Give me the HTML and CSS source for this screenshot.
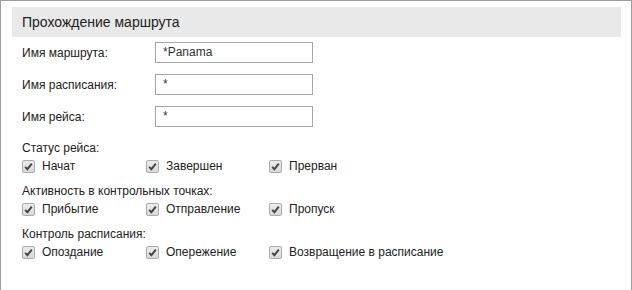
FILE: index.html
```html
<!DOCTYPE html>
<html>
<head>
<meta charset="utf-8">
<link rel="stylesheet" href="styles.css">
</head>
<body>
<div class="panel">
  <div class="header">Прохождение маршрута</div>
  <div class="fields">
    <div class="field"><span class="flabel">Имя маршрута:</span><span class="input">*Panama</span></div>
    <div class="field"><span class="flabel">Имя расписания:</span><span class="input">*</span></div>
    <div class="field"><span class="flabel">Имя рейса:</span><span class="input">*</span></div>
  </div>
  <div class="group">
    <div class="glabel">Статус рейса:</div>
    <div class="checks">
      <div class="check"><span class="box"><svg viewBox="0 0 13 13" width="13" height="13"><path d="M3.2 6.8 L5.4 9.2 L9.8 3.6" fill="none" stroke="#444" stroke-width="1.9"/></svg></span>Начат</div>
      <div class="check"><span class="box"><svg viewBox="0 0 13 13" width="13" height="13"><path d="M3.2 6.8 L5.4 9.2 L9.8 3.6" fill="none" stroke="#444" stroke-width="1.9"/></svg></span>Завершен</div>
      <div class="check"><span class="box"><svg viewBox="0 0 13 13" width="13" height="13"><path d="M3.2 6.8 L5.4 9.2 L9.8 3.6" fill="none" stroke="#444" stroke-width="1.9"/></svg></span>Прерван</div>
    </div>
  </div>
  <div class="group">
    <div class="glabel">Активность в контрольных точках:</div>
    <div class="checks">
      <div class="check"><span class="box"><svg viewBox="0 0 13 13" width="13" height="13"><path d="M3.2 6.8 L5.4 9.2 L9.8 3.6" fill="none" stroke="#444" stroke-width="1.9"/></svg></span>Прибытие</div>
      <div class="check"><span class="box"><svg viewBox="0 0 13 13" width="13" height="13"><path d="M3.2 6.8 L5.4 9.2 L9.8 3.6" fill="none" stroke="#444" stroke-width="1.9"/></svg></span>Отправление</div>
      <div class="check"><span class="box"><svg viewBox="0 0 13 13" width="13" height="13"><path d="M3.2 6.8 L5.4 9.2 L9.8 3.6" fill="none" stroke="#444" stroke-width="1.9"/></svg></span>Пропуск</div>
    </div>
  </div>
  <div class="group">
    <div class="glabel">Контроль расписания:</div>
    <div class="checks">
      <div class="check"><span class="box"><svg viewBox="0 0 13 13" width="13" height="13"><path d="M3.2 6.8 L5.4 9.2 L9.8 3.6" fill="none" stroke="#444" stroke-width="1.9"/></svg></span>Опоздание</div>
      <div class="check"><span class="box"><svg viewBox="0 0 13 13" width="13" height="13"><path d="M3.2 6.8 L5.4 9.2 L9.8 3.6" fill="none" stroke="#444" stroke-width="1.9"/></svg></span>Опережение</div>
      <div class="check"><span class="box"><svg viewBox="0 0 13 13" width="13" height="13"><path d="M3.2 6.8 L5.4 9.2 L9.8 3.6" fill="none" stroke="#444" stroke-width="1.9"/></svg></span>Возвращение в расписание</div>
    </div>
  </div>
</div>
</body>
</html>
```

FILE: styles.css
```css
html, body {
  margin: 0;
  padding: 0;
  background: #ffffff;
}
body {
  font-family: "Liberation Sans", Arial, sans-serif;
  font-size: 12px;
  color: #222222;
}
.panel {
  width: 630px;
  height: 289px;
  border: 1px solid #9c9c9c;
  border-bottom: none;
  overflow: hidden;
}
.header {
  margin: 6px 10px 0 11px;
  height: 30px;
  line-height: 30px;
  background: #e9e9e9;
  padding-left: 10px;
  font-size: 14px;
  color: #222222;
}
.fields {
  padding: 5px 0 13px 21px;
}
.field {
  display: flex;
  align-items: center;
  height: 21px;
  margin-bottom: 11px;
}
.field:last-child {
  margin-bottom: 0;
}
.flabel {
  width: 133px;
}
.input {
  box-sizing: border-box;
  width: 158px;
  height: 21px;
  border: 1px solid #a6a6a6;
  padding: 2px 7px;
  line-height: 15px;
  color: #333333;
  background: #ffffff;
}
.group {
  padding-left: 21px;
  margin-bottom: 7px;
}
.glabel {
  line-height: 16px;
  height: 16px;
}
.checks {
  display: grid;
  grid-template-columns: 124px 123px auto;
  height: 20px;
  align-items: center;
}
.check {
  display: flex;
  align-items: center;
}
.box {
  box-sizing: border-box;
  width: 13px;
  height: 13px;
  border: 1px solid #ababab;
  border-radius: 2px;
  background: linear-gradient(#ececec, #d9d9d9);
  margin-right: 7px;
  display: flex;
  align-items: center;
  justify-content: center;
}
.box svg {
  display: block;
  flex: none;
}
```
